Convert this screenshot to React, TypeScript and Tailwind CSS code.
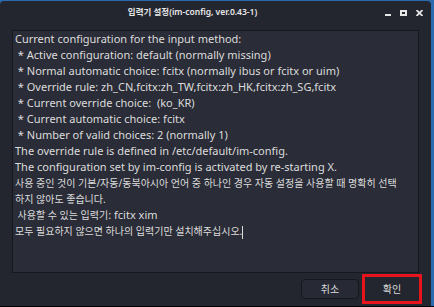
import React from 'react';

const enLines: string[] = [
  'Current configuration for the input method:',
  ' * Active configuration: default (normally missing)',
  ' * Normal automatic choice: fcitx (normally ibus or fcitx or uim)',
  ' * Override rule: zh_CN,fcitx:zh_TW,fcitx:zh_HK,fcitx:zh_SG,fcitx',
  ' * Current override choice:  (ko_KR)',
  ' * Current automatic choice: fcitx',
  ' * Number of valid choices: 2 (normally 1)',
  'The override rule is defined in /etc/default/im-config.',
  'The configuration set by im-config is activated by re-starting X.',
];

const ko = 'text-[10px]';

const TitleButtons = () => (
  <div className="flex items-center gap-[9px] text-[#e6e6e6] mt-[5px]">
    <svg width="6" height="6" viewBox="0 0 6 6">
      <rect x="0" y="4" width="6" height="2" fill="currentColor" />
    </svg>
    <svg width="7" height="6" viewBox="0 0 7 6">
      <rect x="1" y="1" width="5" height="4" fill="none" stroke="currentColor" strokeWidth="2" />
    </svg>
    <svg width="7" height="6" viewBox="0 0 7 6">
      <path d="M0.5 0L6.5 6M6.5 0L0.5 6" stroke="currentColor" strokeWidth="1.8" />
    </svg>
  </div>
);

export default function App() {
  return (
    <div
      className="w-[434px] h-[307px] bg-[#2a6bb0] overflow-hidden"
      style={{ fontFamily: '"Noto Sans", "Noto Sans CJK KR", sans-serif' }}
    >
      <div className="w-[431px] h-[305px] mt-[1px] bg-[#24262f] rounded-t-[4px] flex flex-col">
        {/* title bar */}
        <div className="h-[29px] flex items-start pt-[4px] pr-[8px]">
          <div className="flex-1 text-center text-[8.5px] leading-[14px] font-semibold text-[#e8e8e8]">
            입력기 설정(im-config, ver.0.43-1)
          </div>
          <TitleButtons />
        </div>

        {/* message area */}
        <div className="mx-[12px] h-[243px] bg-[#2a2c37] border border-[#17181d] px-[2px] text-[11px] leading-[16px] text-[#dcdcdc] whitespace-pre">
          {enLines.map((l, i) => (
            <div key={i}>{l}</div>
          ))}
          <div className={ko}>사용 중인 것이 기본/자동/동북아시아 언어 중 하나인 경우 자동 설정을 사용할 때 명확히 선택</div>
          <div className={ko}>하지 않아도 좋습니다.</div>
          <div>
            <span className={ko}> 사용할 수 있는 입력기</span>: fcitx xim
          </div>
          <div className={ko}>
            모두 필요하지 않으면 하나의 입력기만 설치해주십시오.
            <span className="inline-block w-[1px] h-[13px] bg-[#dcdcdc] align-middle" />
          </div>
        </div>

        {/* buttons */}
        <div className="flex justify-end items-start gap-[3px] pr-[9px] pt-[1px]">
          <button className="w-[58px] h-[20px] mt-[5px] rounded-[4px] border border-[#16171c] bg-[#272a34] text-[10px] text-[#dcdcdc]">
            취소
          </button>
          <div className="w-[60px] h-[30px] border-[3px] border-[#e8141b] flex items-center justify-center text-[10px] text-[#dcdcdc]">
            확인
          </div>
        </div>
      </div>
      <div className="h-[1px] bg-black" />
    </div>
  );
}
